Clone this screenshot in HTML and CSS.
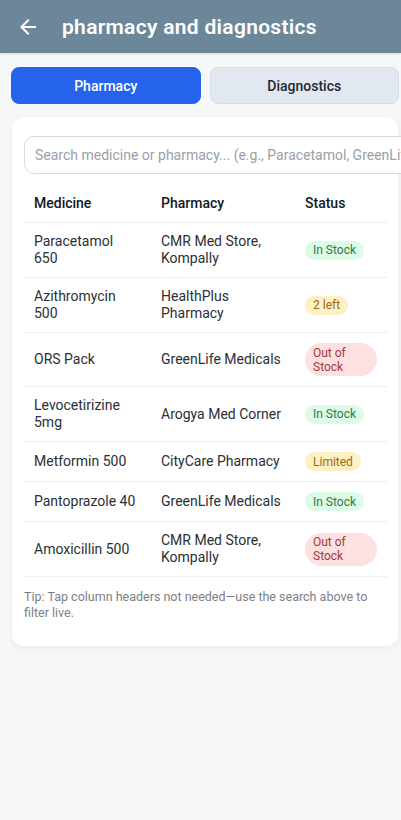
FILE: index.html
```html
<!DOCTYPE html>
<html lang="en">
<head>
<meta charset="utf-8">
<meta name="viewport" content="width=device-width, initial-scale=1">
<title>pharmacy and diagnostics</title>
<link rel="stylesheet" href="styles.css">
</head>
<body>
  <header class="appbar">
    <button class="back" aria-label="Back">
      <svg viewBox="0 0 24 24" width="24" height="24"><path fill="#fff" d="M20 11H7.83l5.59-5.59L12 4l-8 8 8 8 1.41-1.41L7.83 13H20v-2z"/></svg>
    </button>
    <h1 class="title">pharmacy and diagnostics</h1>
  </header>

  <main class="content">
    <div class="tabs">
      <button class="tab tab-active">Pharmacy</button>
      <button class="tab">Diagnostics</button>
    </div>

    <section class="card">
      <input class="search" type="text" placeholder="Search medicine or pharmacy... (e.g., Paracetamol, GreenLife Medicals)">
      <table class="meds">
        <colgroup>
          <col class="c1"><col class="c2"><col class="c3">
        </colgroup>
        <thead>
          <tr><th>Medicine</th><th>Pharmacy</th><th>Status</th></tr>
        </thead>
        <tbody>
          <tr><td>Paracetamol 650</td><td>CMR Med Store, Kompally</td><td><span class="badge ok">In Stock</span></td></tr>
          <tr><td>Azithromycin 500</td><td>HealthPlus Pharmacy</td><td><span class="badge warn">2 left</span></td></tr>
          <tr><td>ORS Pack</td><td>GreenLife Medicals</td><td><span class="badge out">Out of Stock</span></td></tr>
          <tr><td>Levocetirizine 5mg</td><td>Arogya Med Corner</td><td><span class="badge ok">In Stock</span></td></tr>
          <tr><td>Metformin 500</td><td>CityCare Pharmacy</td><td><span class="badge warn">Limited</span></td></tr>
          <tr><td>Pantoprazole 40</td><td>GreenLife Medicals</td><td><span class="badge ok">In Stock</span></td></tr>
          <tr><td>Amoxicillin 500</td><td>CMR Med Store, Kompally</td><td><span class="badge out">Out of Stock</span></td></tr>
        </tbody>
      </table>
      <p class="tip">Tip: Tap column headers not needed—use the search above to filter live.</p>
    </section>
  </main>
</body>
</html>
```

FILE: styles.css
```css
html, body {
  margin: 0;
  padding: 0;
  overflow-x: hidden;
}
body {
  background: #f6f7f9;
  font-family: Roboto, "Noto Sans", "Liberation Sans", sans-serif;
  color: #1f2937;
  min-height: 820px;
}
.appbar {
  height: 53px;
  background: #6c879a;
  display: flex;
  align-items: center;
  padding: 0 16px;
  box-shadow: 0 1px 2px rgba(0, 0, 0, 0.12);
}
.back {
  background: none;
  border: 0;
  padding: 0;
  width: 24px;
  height: 24px;
  display: flex;
}
.title {
  margin: 0 0 0 22px;
  color: #fff;
  font-size: 21px;
  font-weight: 600;
  letter-spacing: 0.3px;
}
.content {
  width: 390px;
  margin-left: 11px;
  overflow: hidden;
  padding-bottom: 8px;
}
.tabs {
  display: flex;
  gap: 9px;
  padding-top: 14px;
  margin-right: 2px;
}
.tab {
  flex: 1;
  height: 37px;
  border-radius: 8px;
  border: 1px solid #d6dde6;
  background: #e2e8f0;
  color: #1f2937;
  font-family: inherit;
  font-size: 14px;
  font-weight: 500;
}
.tab-active {
  background: #2563eb;
  border-color: #2563eb;
  color: #fff;
}
.card {
  margin: 13px 3px 0 1px;
  background: #fff;
  border-radius: 12px;
  box-shadow: 0 2px 8px rgba(15, 23, 42, 0.06);
  padding: 19px 11px 26px 12px;
}
.search {
  display: block;
  box-sizing: border-box;
  width: 400px;
  height: 38px;
  border: 1px solid #d7dbe0;
  border-radius: 10px;
  padding: 0 10px;
  font-family: inherit;
  font-size: 14px;
  color: #1f2937;
  background: #fff;
}
.search::placeholder {
  color: #9aa0a8;
}
.meds {
  width: 100%;
  margin-top: 10px;
  border-collapse: collapse;
  table-layout: fixed;
  font-size: 14px;
  line-height: 17px;
}
.c1 { width: 127px; }
.c2 { width: 144px; }
.c3 { width: 92px; }
.meds th {
  text-align: left;
  font-weight: 500;
  color: #111827;
  padding: 11px 10px 10px;
  border-bottom: 1px solid #eceef1;
}
.meds td {
  padding: 10px 12px 10px 10px;
  border-bottom: 1px solid #eceef1;
  vertical-align: middle;
  color: #2b2f36;
}
.meds td:nth-child(3) {
  padding-right: 10px;
}
.badge {
  display: inline-block;
  font-size: 12px;
  line-height: 14px;
  padding: 2.5px 8px;
  border-radius: 999px;
}
.ok { background: #dcfce7; color: #2f7a47; }
.warn { background: #fdf0c2; color: #9a6a1c; }
.out { background: #fde0e0; color: #a33a3a; }
.tip {
  margin: 12px 0 0;
  font-size: 12.5px;
  line-height: 15.5px;
  color: #7a8089;
}
```
